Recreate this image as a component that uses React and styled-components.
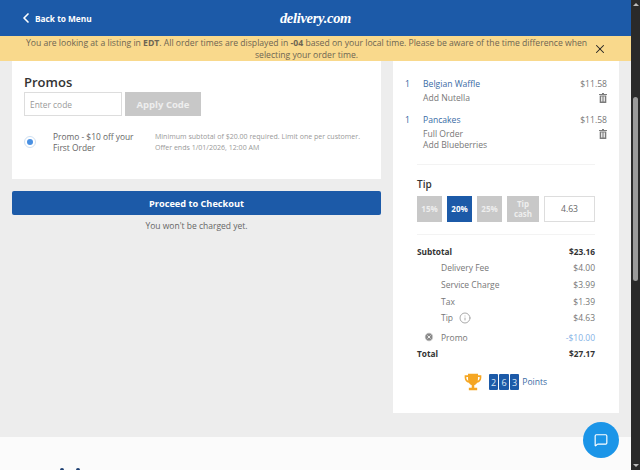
import React from 'react';
import styled, { createGlobalStyle } from 'styled-components';
import { ChevronLeft, X, MessageSquare, Info, CircleX } from 'lucide-react';

const GlobalStyle = createGlobalStyle`
  html, body {
    margin: 0;
    height: 470px;
    overflow: hidden;
    background: #ededed;
    font-family: "Open Sans", "Liberation Sans", sans-serif;
    -webkit-font-smoothing: antialiased;
  }
  * { box-sizing: border-box; }
`;

const Shell = styled.div`
  position: relative;
  display: flex;
  width: 640px;
  height: 470px;
  overflow: hidden;
`;

const Page = styled.div`
  flex: 1;
  min-width: 0;
  display: flex;
  flex-direction: column;
  background: #ededed;
`;

const Header = styled.header`
  height: 36px;
  flex: none;
  background: #1c5aa8;
  display: grid;
  grid-template-columns: 1fr auto 1fr;
  align-items: center;
  padding: 0 18px;
  color: #fff;
`;

const BackLink = styled.a`
  display: flex;
  align-items: center;
  gap: 1px;
  font-size: 8.3px;
  font-weight: 700;
  white-space: nowrap;
`;

const Logo = styled.div`
  font-family: "Liberation Serif", serif;
  font-style: italic;
  font-weight: 700;
  font-size: 14.5px;
  letter-spacing: -0.3px;
  line-height: 36px;
`;

const Banner = styled.div`
  flex: none;
  height: 25px;
  background: #f9d98c;
  display: flex;
  align-items: center;
  padding: 0 24px 0 20px;
`;

const BannerText = styled.p`
  flex: 1;
  margin: 0;
  text-align: center;
  font-size: 8.65px;
  line-height: 12px;
  color: #6d6553;
`;

const CloseButton = styled.span`
  display: flex;
  color: #222;
`;

const Main = styled.main`
  flex: none;
  height: 376px;
  display: grid;
  grid-template-columns: 369px 226px;
  justify-content: start;
  column-gap: 12px;
  padding: 0 0 0 12px;
`;

const LeftColumn = styled.div`
  display: flex;
  flex-direction: column;
`;

const PromoCard = styled.section`
  height: 118px;
  background: #fff;
  padding: 14px 12px 0;
`;

const PromoTitle = styled.h2`
  margin: 0;
  font-size: 13px;
  line-height: 15px;
  font-weight: 600;
  color: #333;
`;

const PromoForm = styled.div`
  display: flex;
  gap: 3px;
  margin-top: 2px;
`;

const CodeInput = styled.div`
  width: 98px;
  height: 24px;
  border: 1px solid #ddd;
  padding-left: 5px;
  display: flex;
  align-items: center;
  font-size: 8.4px;
  color: #999;
`;

const ApplyButton = styled.div`
  width: 76px;
  height: 24px;
  background: #c8c8c8;
  color: #eee;
  font-size: 9.5px;
  font-weight: 700;
  display: flex;
  align-items: center;
  justify-content: center;
`;

const PromoRow = styled.div`
  display: flex;
  align-items: center;
  margin-top: 15px;
`;

const Radio = styled.span`
  flex: none;
  width: 12px;
  height: 12px;
  border-radius: 50%;
  border: 1px solid #cfe0f2;
  display: flex;
  align-items: center;
  justify-content: center;
  &::after {
    content: "";
    width: 6px;
    height: 6px;
    border-radius: 50%;
    background: #4a90e2;
  }
`;

const PromoName = styled.div`
  width: 102px;
  margin-left: 17px;
  font-size: 8.4px;
  line-height: 11px;
  color: #666;
  white-space: nowrap;
`;

const PromoTerms = styled.div`
  font-size: 7.05px;
  line-height: 11px;
  color: #999;
  white-space: nowrap;
`;

const CheckoutButton = styled.div`
  margin-top: 12px;
  height: 24px;
  background: #1c5aa8;
  border-radius: 2px;
  color: #fff;
  font-size: 9.2px;
  font-weight: 700;
  display: flex;
  align-items: center;
  justify-content: center;
`;

const ChargeNote = styled.div`
  margin-top: 5px;
  text-align: center;
  font-size: 8.5px;
  line-height: 12px;
  color: #666;
`;

const CartCard = styled.aside`
  height: 352px;
  background: #fff;
  padding: 18px 12px 0;
`;

const CartItem = styled.div`
  display: grid;
  grid-template-columns: 18px 1fr auto;
  margin-bottom: 11px;
  font-size: 8.6px;
  line-height: 11px;
`;

const Qty = styled.span`
  color: #2f629f;
`;

const ItemBody = styled.div`
  color: #777;
`;

const ItemName = styled.div`
  color: #3a6ba5;
  margin-bottom: 3px;
`;

const ItemPrice = styled.div`
  display: flex;
  flex-direction: column;
  align-items: flex-end;
  gap: 3px;
  color: #777;
`;

const Summary = styled.div`
  padding: 2px 12px 0;
`;

const Divider = styled.hr`
  margin: 0;
  border: 0;
  border-top: 1px solid #f3f3f3;
`;

const TipTitle = styled.h3`
  margin: 13px 0 0;
  font-size: 10px;
  line-height: 12px;
  font-weight: 600;
  color: #333;
`;

const TipRow = styled.div`
  display: flex;
  gap: 5px;
  margin: 6px 0 12px;
`;

const TipOption = styled.div`
  width: ${p => (p.$wide ? 32 : 25)}px;
  height: 26px;
  background: ${p => (p.$active ? '#1c5aa8' : '#c8c8c8')};
  color: ${p => (p.$active ? '#fff' : '#eee')};
  font-size: 8px;
  line-height: 10px;
  font-weight: 700;
  display: flex;
  align-items: center;
  justify-content: center;
  text-align: center;
`;

const TipInput = styled.div`
  width: 51px;
  height: 26px;
  border: 1px solid #ddd;
  font-size: 8.6px;
  color: #666;
  display: flex;
  align-items: center;
  justify-content: center;
`;

const Totals = styled.div`
  margin-top: 8px;
`;

const TotalRow = styled.div`
  position: relative;
  display: flex;
  justify-content: space-between;
  align-items: center;
  height: 16.6px;
  margin-bottom: ${p => (p.$spaced ? 3 : 0)}px;
  padding-left: ${p => (p.$bold ? 0 : 24)}px;
  font-size: ${p => (p.$bold ? 8.3 : 8.5)}px;
  font-weight: ${p => (p.$bold ? 700 : 400)};
  color: ${p => (p.$bold ? '#333' : '#777')};
`;

const RowLabel = styled.span`
  display: flex;
  align-items: center;
  gap: 6px;
`;

const RemovePromo = styled.span`
  position: absolute;
  left: 7px;
  top: 50%;
  transform: translateY(-50%);
  display: flex;
  color: #888;
`;

const Discount = styled.span`
  color: #86b2e6;
`;

const PointsRow = styled.div`
  margin-top: 10px;
  padding-right: 2px;
  display: flex;
  align-items: center;
  justify-content: center;
  gap: 6px;
`;

const Digits = styled.div`
  display: flex;
  gap: 1px;
`;

const Digit = styled.span`
  width: 9.500px;
  height: 16px;
  background: #1c5aa8;
  border-radius: 1px;
  color: #dfe9f5;
  font-size: 9px;
  display: flex;
  align-items: center;
  justify-content: center;
`;

const PointsLabel = styled.span`
  margin-left: -3px;
  font-size: 8.6px;
  color: #3a6ba5;
`;

const Footer = styled.footer`
  flex: 1;
  min-height: 0;
  background: #fbfbfb;
  display: flex;
  gap: 12px;
  padding: 31px 0 0 60px;
`;

const FooterMark = styled.span`
  width: 4px;
  height: 4px;
  border-radius: 50%;
  background: #1d3f72;
`;

const ChatButton = styled.div`
  position: absolute;
  left: 583px;
  top: 422px;
  width: 36px;
  height: 36px;
  border-radius: 50%;
  background: #1b95e8;
  color: #fff;
  display: flex;
  align-items: center;
  justify-content: center;
`;

const ScrollTrack = styled.div`
  flex: none;
  width: 9px;
  background: #2a2a2a;
  display: flex;
  flex-direction: column;
  align-items: center;
  padding: 3px 0;
`;

const ScrollArrow = styled.span`
  width: 0;
  height: 0;
  border-left: 3px solid transparent;
  border-right: 3px solid transparent;
  border-bottom: ${p => (p.$down ? '0' : '3px solid #bbb')};
  border-top: ${p => (p.$down ? '3px solid #bbb' : '0')};
  margin-top: ${p => (p.$down ? 'auto' : '0')};
`;

const ScrollThumb = styled.div`
  width: 5px;
  height: 184px;
  margin-top: 91px;
  border-radius: 3px;
  background: #9a9a9a;
`;

function TrashIcon() {
  return (
    <svg width="8" height="10" viewBox="0 0 8 10" fill="#7b7b7b">
      <path d="M3 0h2v1h3v1H0V1h3V0z" />
      <path d="M.7 2.600h6.600V10H.7V2.600zm1.300 1v5h.8v-5H2zm1.600 0v5h.8v-5h-.8zm1.600 0v5H6v-5h-.8z" fillRule="evenodd" />
    </svg>
  );
}

function Trophy() {
  return (
    <svg width="20" height="20" viewBox="0 0 24 24" fill="#f5a623">
      <path fillRule="evenodd" d="M6 2h12v2h4v3c0 3-2 5.500-5 6-.8 1.500-2 2.500-3.500 3v3H17v3H7v-3h3.500v-3C9 15.500 7.800 14.500 7 13c-3-.5-5-3-5-6V4h4V2zM6 6H4v1c0 1.600.8 3 2.300 3.600C6.100 9.500 6 8 6 6zm12 0c0 2-.1 3.500-.3 4.600C19.200 10 20 8.600 20 7V6h-2z" />
    </svg>
  );
}

export default function App() {
  return (
    <Shell>
      <GlobalStyle />
      <Page>
        <Header>
          <BackLink>
            <ChevronLeft size={16} strokeWidth={2.5} />
            Back to Menu
          </BackLink>
          <Logo>delivery.com</Logo>
        </Header>
        <Banner>
          <BannerText>
            You are looking at a listing in <b>EDT</b>. All order times are displayed in <b>-04</b> based on your local time. Please be aware of the time difference when selecting your order time.
          </BannerText>
          <CloseButton><X size={14} strokeWidth={1.8} /></CloseButton>
        </Banner>
        <Main>
          <LeftColumn>
            <PromoCard>
              <PromoTitle>Promos</PromoTitle>
              <PromoForm>
                <CodeInput>Enter code</CodeInput>
                <ApplyButton>Apply Code</ApplyButton>
              </PromoForm>
              <PromoRow>
                <Radio />
                <PromoName>Promo - $10 off your<br />First Order</PromoName>
                <PromoTerms>
                  Minimum subtotal of $20.00 required. Limit one per customer.<br />
                  Offer ends 1/01/2026, 12:00 AM
                </PromoTerms>
              </PromoRow>
            </PromoCard>
            <CheckoutButton>Proceed to Checkout</CheckoutButton>
            <ChargeNote>You won't be charged yet.</ChargeNote>
          </LeftColumn>
          <CartCard>
            <CartItem>
              <Qty>1</Qty>
              <ItemBody>
                <ItemName>Belgian Waffle</ItemName>
                Add Nutella
              </ItemBody>
              <ItemPrice>$11.58<TrashIcon /></ItemPrice>
            </CartItem>
            <CartItem>
              <Qty>1</Qty>
              <ItemBody>
                <ItemName>Pancakes</ItemName>
                Full Order<br />Add Blueberries
              </ItemBody>
              <ItemPrice>$11.58<TrashIcon /></ItemPrice>
            </CartItem>
            <Summary>
              <Divider />
              <TipTitle>Tip</TipTitle>
              <TipRow>
                <TipOption>15%</TipOption>
                <TipOption $active>20%</TipOption>
                <TipOption>25%</TipOption>
                <TipOption $wide>Tip<br />cash</TipOption>
                <TipInput>4.63</TipInput>
              </TipRow>
              <Divider />
              <Totals>
                <TotalRow $bold><span>Subtotal</span><span>$23.16</span></TotalRow>
                <TotalRow><span>Delivery Fee</span><span>$4.00</span></TotalRow>
                <TotalRow><span>Service Charge</span><span>$3.99</span></TotalRow>
                <TotalRow><span>Tax</span><span>$1.39</span></TotalRow>
                <TotalRow $spaced>
                  <RowLabel>Tip <Info size={12} color="#aaa" /></RowLabel>
                  <span>$4.63</span>
                </TotalRow>
                <TotalRow>
                  <RemovePromo><CircleX size={10} fill="#888" color="#fff" /></RemovePromo>
                  <span>Promo</span>
                  <Discount>-$10.00</Discount>
                </TotalRow>
                <TotalRow $bold><span>Total</span><span>$27.17</span></TotalRow>
              </Totals>
              <PointsRow>
                <Trophy />
                <Digits>
                  <Digit>2</Digit>
                  <Digit>6</Digit>
                  <Digit>3</Digit>
                </Digits>
                <PointsLabel>Points</PointsLabel>
              </PointsRow>
            </Summary>
          </CartCard>
        </Main>
        <Footer>
          <FooterMark />
          <FooterMark />
        </Footer>
      </Page>
      <ScrollTrack>
        <ScrollArrow />
        <ScrollThumb />
        <ScrollArrow $down />
      </ScrollTrack>
      <ChatButton><MessageSquare size={14} /></ChatButton>
    </Shell>
  );
}
